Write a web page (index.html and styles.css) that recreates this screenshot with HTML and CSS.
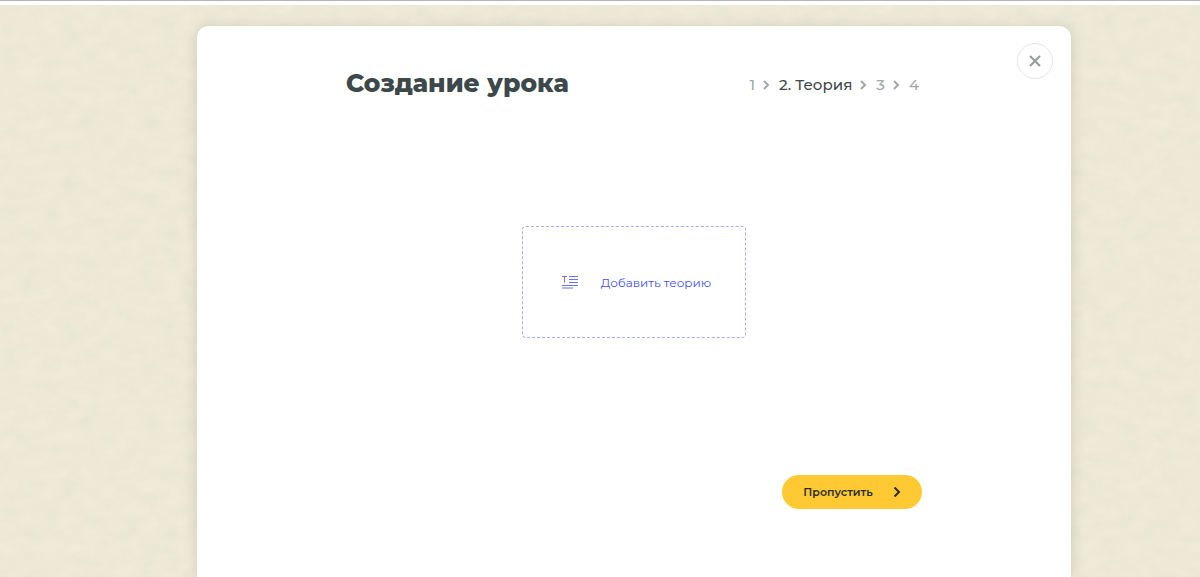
FILE: index.html
```html
<!DOCTYPE html>
<html lang="ru">

<head>
    <meta charset="UTF-8">
    <meta name="viewport" content="width=device-width, initial-scale=1.0">
    <title>Создание урока</title>
    <link rel="stylesheet" href="styles.css">
</head>

<body>
    <div class="topline"></div>
    <div class="page">
        <main class="modal">
            <button class="close" type="button" aria-label="Закрыть">
                <svg width="12" height="12" viewBox="0 0 12 12">
                    <path d="M1 1l10 10M11 1L1 11" />
                </svg>
            </button>

            <div class="content">
                <header class="header">
                    <h1>Создание урока</h1>
                    <nav>
                        <ol class="steps">
                            <li><a href="#">1</a></li>
                            <li>
                                <svg width="7" height="10" viewBox="0 0 7 10"><path d="M1 1l4 4-4 4" /></svg>
                                <a href="#" class="active" aria-current="step">2. Теория</a>
                            </li>
                            <li>
                                <svg width="7" height="10" viewBox="0 0 7 10"><path d="M1 1l4 4-4 4" /></svg>
                                <a href="#">3</a>
                            </li>
                            <li>
                                <svg width="7" height="10" viewBox="0 0 7 10"><path d="M1 1l4 4-4 4" /></svg>
                                <a href="#">4</a>
                            </li>
                        </ol>
                    </nav>
                </header>

                <button class="add" type="button">
                    <svg width="18" height="14" viewBox="0 0 18 14">
                        <path d="M1 1.5h5M3.5 1.5v6M8 1.5h9M8 4.5h9M8 7.5h9M1 10.5h16M1 13h11" />
                    </svg>
                    Добавить теорию
                </button>

                <button class="skip" type="button">
                    Пропустить
                    <svg width="8" height="12" viewBox="0 0 8 12">
                        <path d="M1.5 1.5L6 6l-4.5 4.5" />
                    </svg>
                </button>
            </div>
        </main>
    </div>
</body>

</html>
```
FILE: styles.css
```css
* {
    margin: 0;
    padding: 0;
    box-sizing: border-box;
}

body {
    display: flex;
    flex-direction: column;
    min-height: 100vh;
    color: #3d484b;
    font-family: Montserrat, Inter, "Noto Sans", sans-serif;
}

button {
    font-family: inherit;
    cursor: pointer;
}

svg {
    fill: none;
    stroke: currentColor;
}

.topline {
    height: 5px;
    border-top: 1px solid #b4b4b4;
    background: #fff;
}

/* paper texture */
.page {
    flex: 1;
    display: flex;
    justify-content: center;
    padding: 21px 0 0 68px;
    background: #f0ead8 url("data:image/svg+xml,%3Csvg xmlns='http://www.w3.org/2000/svg' width='300' height='300'%3E%3Cfilter id='n' x='0' y='0' width='1' height='1' color-interpolation-filters='sRGB'%3E%3CfeTurbulence type='fractalNoise' baseFrequency='.05 .08' numOctaves='5' stitchTiles='stitch'/%3E%3CfeColorMatrix values='0 0 0 0 .89 0 0 0 0 .9 0 0 0 0 .82 1.2 0 0 0 -.35'/%3E%3C/filter%3E%3Crect width='300' height='300' filter='url(%23n)'/%3E%3C/svg%3E");
}

.modal {
    position: relative;
    width: 100%;
    max-width: 874px;
    padding: 40px 20px;
    border-radius: 12px 12px 0 0;
    background: #fff;
    box-shadow: 0 2px 14px rgba(120, 120, 80, 0.25);
}

.close {
    position: absolute;
    top: 17px;
    right: 18px;
    display: flex;
    align-items: center;
    justify-content: center;
    width: 36px;
    height: 36px;
    border: 1px solid #e4e6e6;
    border-radius: 50%;
    background: #fff;
    color: #949a9c;
}

.close svg {
    stroke-width: 2;
}

.content {
    display: flex;
    flex-direction: column;
    max-width: 576px;
    margin: 0 auto;
}

.header {
    display: flex;
    align-items: center;
    justify-content: space-between;
    padding-right: 3px;
}

h1 {
    font-size: 25px;
    line-height: 34px;
    font-weight: 800;
}

.steps {
    display: flex;
    gap: 8px;
    padding-top: 4px;
    font-size: 15px;
    line-height: 20px;
    font-weight: 500;
    list-style: none;
}

.steps li {
    display: flex;
    align-items: center;
    gap: 9px;
    color: #a3a7a8;
}

.steps svg {
    stroke-width: 2;
}

.steps a {
    color: inherit;
    text-decoration: none;
}

.steps .active {
    color: #3d484b;
}

.add {
    display: flex;
    align-items: center;
    justify-content: center;
    gap: 22px;
    align-self: center;
    width: 224px;
    height: 112px;
    margin-top: 126px;
    padding-left: 4px;
    border: 1px dashed #a5adfb;
    border-radius: 4px;
    background: #fff;
    color: #4453ee;
    font-size: 12px;
}

.add svg {
    color: #6773f8;
}

.skip {
    display: flex;
    align-items: center;
    justify-content: center;
    gap: 20px;
    align-self: flex-end;
    width: 140px;
    height: 34px;
    margin-top: 137px;
    border: 0;
    border-radius: 17px;
    background: #ffc933;
    color: #2b2d26;
    font-size: 11px;
    font-weight: 600;
}

.skip svg {
    stroke-width: 2;
}
```
